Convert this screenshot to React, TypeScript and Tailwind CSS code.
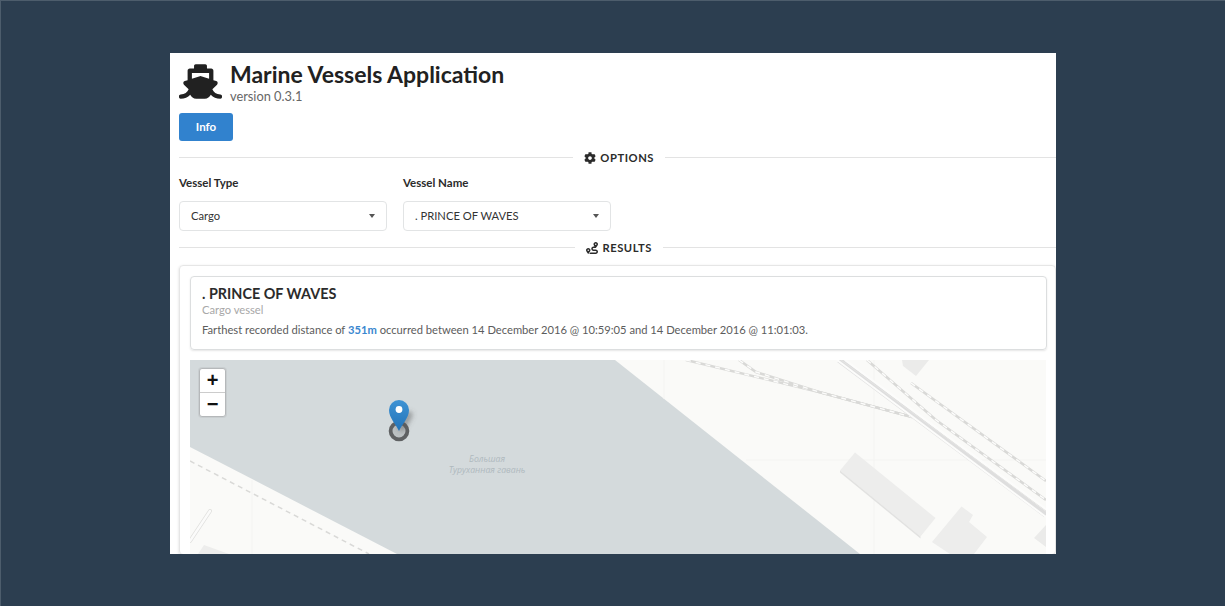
import type { ReactNode } from 'react';
import { FaShip, FaCog, FaRoute } from 'react-icons/fa';

const Caret = () => (
  <span className="w-0 h-0 border-x-[3.5px] border-x-transparent border-t-[4px] border-t-[#555]" />
);

const Divider = ({ icon, label, className, rightLine }: { icon: ReactNode; label: string; className: string; rightLine: string }) => (
  <div className={`flex items-center ${className}`}>
    <div className="flex-1 h-0 border-t border-t-[#e3e3e3]" />
    <div className="flex items-center gap-[4px] px-[11px] text-[11.2px] font-bold tracking-[0.55px] text-[#2b2b2b] leading-none whitespace-nowrap">
      {icon}
      {label}
    </div>
    <div className={`h-0 border-t border-t-[#e3e3e3] ${rightLine}`} />
  </div>
);

const Select = ({ label, value }: { label: string; value: string }) => (
  <div className="w-[208px]">
    <div className="text-[11.5px] font-bold text-[#2b2b2b] leading-[14px] mb-[11px]">{label}</div>
    <div className="h-[30px] border border-[#e2e4e5] rounded-[4px] flex items-center justify-between pl-[11px] pr-[11px] text-[11.2px] text-[#333]">
      <span className="pt-[1px]">{value}</span>
      <Caret />
    </div>
  </div>
);

const RailLine = ({ d }: { d: string }) => (
  <>
    <path d={d} fill="none" stroke="#d9d9d7" strokeWidth="2.6" />
    <path d={d} fill="none" stroke="#fcfcfb" strokeWidth="1.4" strokeDasharray="5 5" />
  </>
);

// map coordinates are relative to the top left of the 856x194 tile view
const MapDrawing = () => (
  <svg width="856" height="194" viewBox="0 0 856 194" className="block">
    <rect width="856" height="194" fill="#fafaf8" />
    <path d="M0 0H425L670 194H207L0 87Z" fill="#d4dadc" />
    <path d="M474 0V39M684 0V194M62 120V194M556 100H856" stroke="#f4f4f2" strokeWidth="1" fill="none" />

    <path d="M0 101L179 194" fill="none" stroke="#d9d9d7" strokeWidth="1.5" strokeDasharray="5 4" />
    <path d="M20 151L0 181" fill="none" stroke="#dfdfdd" strokeWidth="4" strokeLinecap="round" />
    <path d="M20 151L0 181" fill="none" stroke="#fbfbfa" strokeWidth="2.4" strokeLinecap="round" />
    <path d="M14 185L39 194H8Z" fill="#ededec" />

    <RailLine d="M496 0L629 32L722 57" />
    <RailLine d="M549 0L566 12L629 32L722 57" />
    <path d="M649 0L856 155" fill="none" stroke="#dedede" strokeWidth="5.5" />
    <path d="M651 0L856 151" fill="none" stroke="#e4e4e3" strokeWidth="1" />
    <path d="M647 0L856 157" fill="none" stroke="#fcfcfb" strokeWidth="2" />
    <path d="M655 0L856 149" fill="none" stroke="#fcfcfb" strokeWidth="2" />
    <RailLine d="M677 0L746 60L856 140" />
    <RailLine d="M721 23L856 121" />
    <path d="M712 0H739L726 16L713 6Z" fill="#ebebea" />

    <path d="M665 92.5L745.5 158L730.5 176.5L650 110.5Z" fill="#ededec" />
    <path d="M650 110.5L730.5 176.5V178.5L650 112.5Z" fill="#e2e2e1" />
    <path d="M771.5 146.5L783 155L779 162L797 177L784 194H760L742 182Z" fill="#ededec" />
    <path d="M856 165L844 178L856 187Z" fill="#ebebea" />

    <g fontFamily="'Open Sans', sans-serif" fontStyle="italic" fontSize="8.7" fill="#afb9be" textAnchor="middle">
      <text x="297" y="102">Большая</text>
      <text x="297" y="113">Туруханная гавань</text>
    </g>
  </svg>
);

const Marker = () => (
  <svg width="44" height="46" viewBox="0 0 44 46" className="absolute left-[196px] top-[39px]">
    <defs>
      <linearGradient id="pin" x1="0" y1="0" x2="0" y2="1">
        <stop offset="0" stopColor="#3f93d4" />
        <stop offset="1" stopColor="#2273b8" />
      </linearGradient>
      <filter id="soft" x="-80%" y="-80%" width="260%" height="260%">
        <feGaussianBlur stdDeviation="2.6" />
      </filter>
    </defs>
    <circle cx="13" cy="32" r="8.4" fill="#8f9396" fillOpacity="0.35" stroke="#5f6163" strokeWidth="3.8" />
    <path d="M14 31L21 20L24 13" stroke="#555" strokeOpacity="0.5" strokeWidth="7" fill="none" filter="url(#soft)" />
    <path d="M13 32C10 25 3 19 3 11A10 10 0 0 1 23 11C23 19 16 25 13 32Z" fill="url(#pin)" />
    <circle cx="13" cy="10.5" r="3.4" fill="#fff" />
  </svg>
);

export default function App() {
  return (
    <div className="min-h-[606px] bg-[#2c3e50] shadow-[inset_1px_1px_0_#4d5d6c] flex items-center justify-center pl-[1px] font-['Lato','Liberation_Sans',sans-serif] text-[#212121]">
      <div className="w-[886px] h-[501px] overflow-hidden bg-white pl-[9px]">
        <div className="flex items-start gap-[8px] pt-[8px] h-[51px]">
          <FaShip size={43} className="text-[#212121] mt-[-1px]" />
          <div>
            <h1 className="text-[23px] font-bold leading-[26px]">Marine Vessels Application</h1>
            <div className="text-[12.8px] leading-[16px] mt-[1.5px] text-[#666]">version 0.3.1</div>
          </div>
        </div>

        <button className="block mt-[9px] w-[54px] h-[28px] pt-[1px] rounded-[3px] bg-[#3182ce] text-white text-[11.5px] font-bold">
          Info
        </button>

        <Divider icon={<FaCog size={12} />} label="OPTIONS" rightLine="w-[391px]" className="mt-[11px] h-[12px]" />

        <div className="flex gap-[16px] mt-[12px]">
          <Select label="Vessel Type" value="Cargo" />
          <Select label="Vessel Name" value=". PRINCE OF WAVES" />
        </div>

        <Divider icon={<FaRoute size={12} />} label="RESULTS" rightLine="w-[393px]" className="mt-[11px] h-[12px]" />

        <div className="mt-[11px] border border-[#e6e6e6] rounded-[4px] shadow-[0_1px_3px_rgba(0,0,0,0.15)] pt-[10px] pl-[10px] pr-[8px]">
          <div className="border border-[#dcdedf] rounded-[4px] shadow-[0_1px_2px_rgba(0,0,0,0.1)] h-[74px] pl-[11px] pt-[8px]">
            <div className="text-[14.4px] font-bold leading-[17px] text-[#2b2b2b]">. PRINCE OF WAVES</div>
            <div className="text-[11.2px] leading-[14px] mt-[1px] text-[#a8a8a8]">Cargo vessel</div>
            <div className="text-[11.2px] leading-[14px] mt-[6px] text-[#5c5c5c]">
              Farthest recorded distance of <span className="font-bold text-[#3a87cf]">351m</span> occurred between 14 December 2016 @ 10:59:05 and 14 December 2016 @ 11:01:03.
            </div>
          </div>

          <div className="relative mt-[10px] w-[856px]">
            <MapDrawing />
            <Marker />
            <div className="absolute left-[9px] top-[8px] w-[27px] border border-[#b5b8ba] rounded-[3px] bg-white shadow-[0_0_0_1px_rgba(0,0,0,0.05)] font-['Liberation_Sans',sans-serif] font-bold text-[#111] text-center">
              <div className="h-[24px] leading-[23px] text-[20px] border-b border-b-[#ccc]">+</div>
              <div className="h-[23px] leading-[22px] text-[20px]">−</div>
            </div>
          </div>
        </div>
      </div>
    </div>
  );
}
